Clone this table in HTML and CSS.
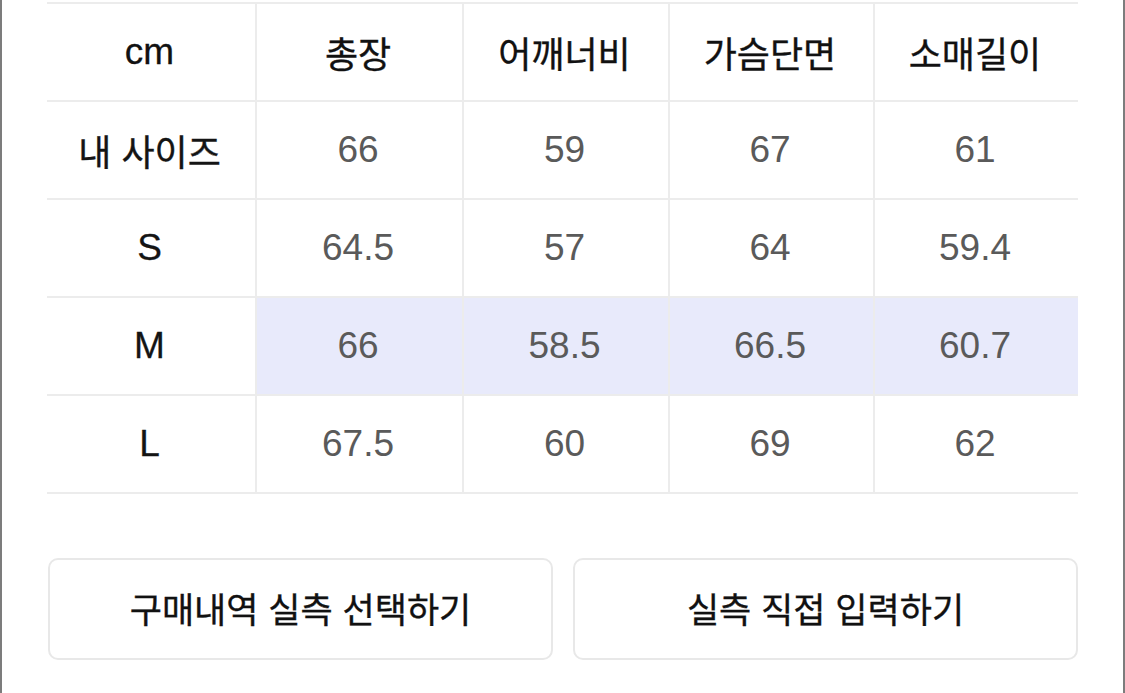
FILE: index.html
```html
<!DOCTYPE html>
<html lang="ko">
<head>
<meta charset="utf-8">
<title>실측 사이즈</title>
<link rel="stylesheet" href="styles.css">
</head>
<body>
<div class="frame">
  <div class="size-table">
    <div class="cell head label">cm</div>
    <div class="cell head ko">총장</div>
    <div class="cell head ko">어깨너비</div>
    <div class="cell head ko">가슴단면</div>
    <div class="cell head ko">소매길이</div>

    <div class="cell label ko">내 사이즈</div>
    <div class="cell val">66</div>
    <div class="cell val">59</div>
    <div class="cell val">67</div>
    <div class="cell val">61</div>

    <div class="cell label">S</div>
    <div class="cell val">64.5</div>
    <div class="cell val">57</div>
    <div class="cell val">64</div>
    <div class="cell val">59.4</div>

    <div class="cell label">M</div>
    <div class="cell val hl">66</div>
    <div class="cell val hl">58.5</div>
    <div class="cell val hl">66.5</div>
    <div class="cell val hl">60.7</div>

    <div class="cell label">L</div>
    <div class="cell val">67.5</div>
    <div class="cell val">60</div>
    <div class="cell val">69</div>
    <div class="cell val">62</div>
  </div>
  <div class="actions">
    <button class="btn">구매내역 실측 선택하기</button>
    <button class="btn">실측 직접 입력하기</button>
  </div>
</div>
</body>
</html>
```
FILE: styles.css
```css
html, body {
  margin: 0;
  padding: 0;
  background: #ffffff;
}
body {
  font-family: "Liberation Sans", "Noto Sans CJK KR", sans-serif;
  color: #111;
}
.frame {
  box-sizing: border-box;
  width: 1125px;
  height: 693px;
  border-left: 2px solid #7c7c7c;
  border-right: 2px solid #7c7c7c;
  padding: 2px 45px 0 45px;
  display: flex;
  flex-direction: column;
}
.size-table {
  display: grid;
  grid-template-columns: 208px 207px 206px 205px 205px;
  grid-auto-rows: 98px;
  border-top: 2px solid #ececec;
}
.cell {
  box-sizing: border-box;
  display: flex;
  align-items: center;
  justify-content: center;
  border-bottom: 2px solid #ececec;
  font-size: 37px;
  padding-right: 3px;
}
.cell:not(:nth-child(5n+1)) {
  border-left: 2px solid #ececec;
}
.label {
  color: #141414;
  -webkit-text-stroke: 0.3px currentColor;
}
.head {
  color: #111;
}
.ko {
  font-family: "Noto Sans CJK KR", sans-serif;
  font-size: 36px;
  font-weight: 400;
  -webkit-text-stroke: 0.35px currentColor;
}
.val {
  color: #5a5a5a;
}
.hl {
  background: #e8eafb;
}
.actions {
  display: flex;
  gap: 20px;
  margin-top: 64px;
  padding-left: 1px;
}
.btn {
  flex: 1;
  height: 102px;
  box-sizing: border-box;
  background: #fff;
  border: 2px solid #e8e8e8;
  border-radius: 10px;
  font-family: "Noto Sans CJK KR", sans-serif;
  font-size: 35px;
  font-weight: 400;
  -webkit-text-stroke: 0.35px currentColor;
  color: #111;
  padding: 0 0 3px 0;
}
```
